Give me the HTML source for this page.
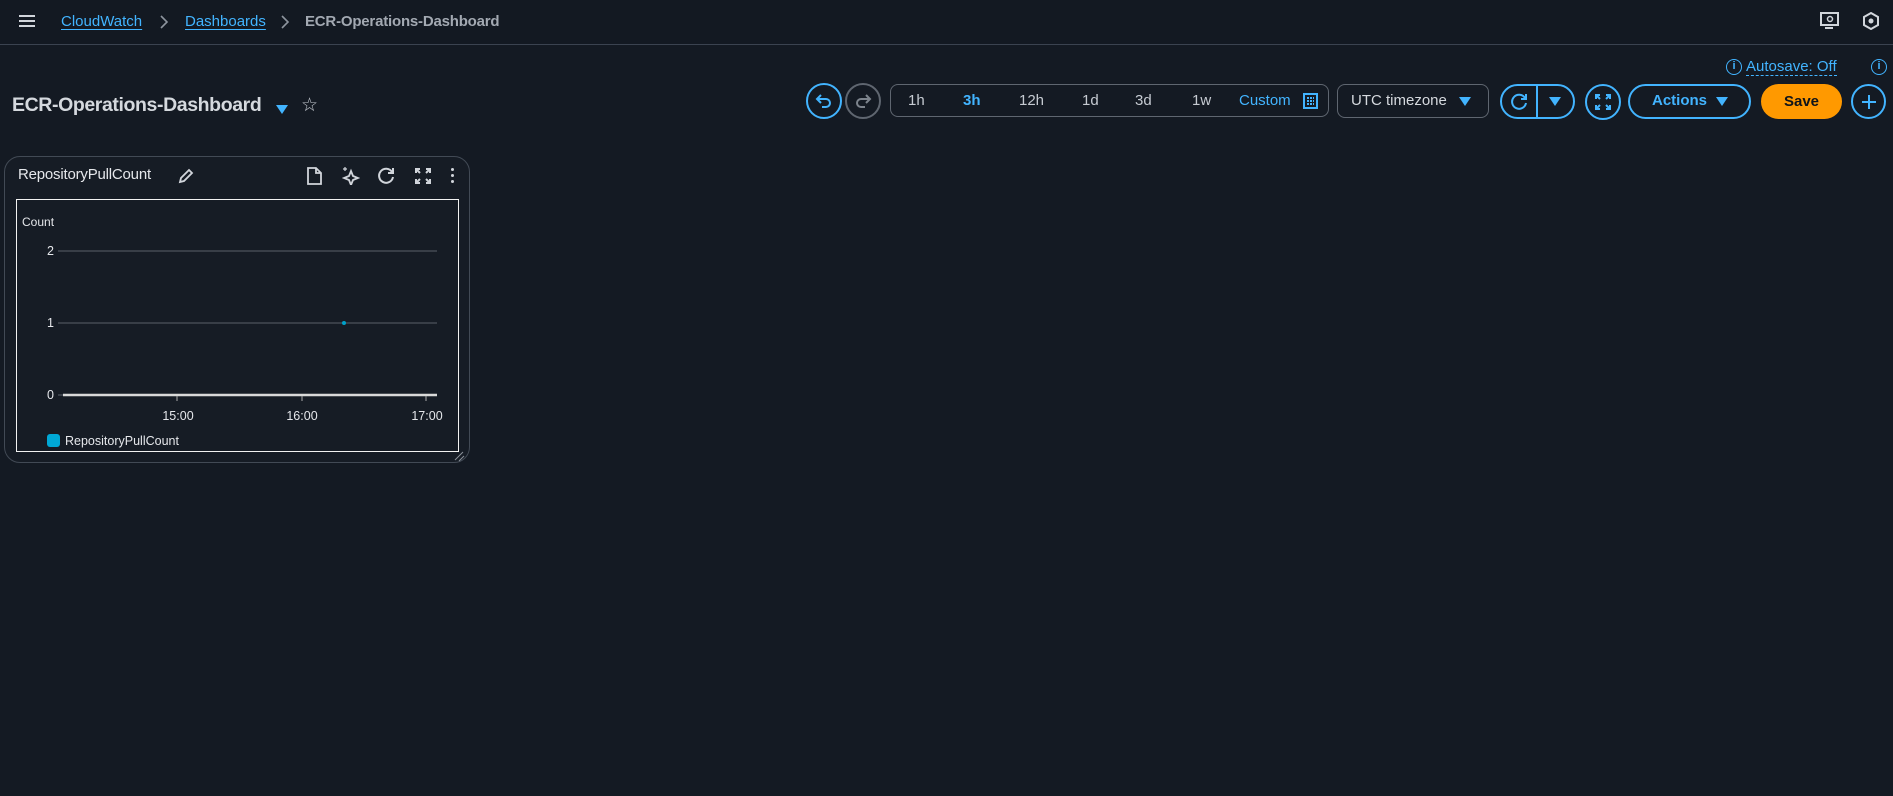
<!DOCTYPE html>
<html><head><meta charset="utf-8"><style>
*{box-sizing:border-box;margin:0;padding:0}
body{width:1893px;height:796px;background:#141a23;font-family:"Liberation Sans",sans-serif;color:#d1d5db;position:relative;overflow:hidden}
.a{position:absolute}
.hdr{left:0;top:0;width:1893px;height:45px;border-bottom:1px solid #3b4350;background:#131922}
.link{color:#42b4ff;text-decoration:underline;text-underline-offset:3px;font-size:15px}
.circ{border:2px solid #42b4ff;border-radius:50%;width:36px;height:36px;display:flex;align-items:center;justify-content:center}
.tr{font-size:15px;color:#c6cbd2;top:92px}
</style></head><body>
<div class="a hdr"></div>
<div class="a" style="left:19px;top:15px;width:16px;height:2px;background:#d1d5db;box-shadow:0 5px 0 #d1d5db,0 10px 0 #d1d5db"></div>
<div class="a link" style="left:61px;top:13px">CloudWatch</div>
<svg class="a" style="left:159px;top:14px" width="10" height="16"><path d="M2 2l6 6-6 6" fill="none" stroke="#8d949e" stroke-width="1.6"/></svg>
<div class="a link" style="left:185px;top:13px">Dashboards</div>
<svg class="a" style="left:280px;top:14px" width="10" height="16"><path d="M2 2l6 6-6 6" fill="none" stroke="#8d949e" stroke-width="1.6"/></svg>
<div class="a" style="left:305px;top:13px;font-size:15px;font-weight:bold;color:#a3a9b2;letter-spacing:-0.2px">ECR-Operations-Dashboard</div>
<svg class="a" style="left:1820px;top:12px" width="20" height="18" viewBox="0 0 20 18"><rect x="1" y="1" width="17" height="12" fill="none" stroke="#d1d5db" stroke-width="2"/><path d="M5 16h8" stroke="#d1d5db" stroke-width="2"/><circle cx="10" cy="7" r="2.5" fill="none" stroke="#d1d5db" stroke-width="1.5"/></svg>
<svg class="a" style="left:1862px;top:12px" width="18" height="18" viewBox="0 0 18 18"><path d="M9 1l7 4v8l-7 4-7-4V5z" fill="none" stroke="#d1d5db" stroke-width="2"/><circle cx="9" cy="9" r="2.5" fill="#d1d5db"/></svg>

<div class="a" style="left:12px;top:94px;font-size:19.5px;font-weight:bold;color:#d5d9de;letter-spacing:-0.4px">ECR-Operations-Dashboard</div>
<div class="a" style="left:276px;top:105px;width:0;height:0;border-left:6px solid transparent;border-right:6px solid transparent;border-top:9px solid #42b4ff"></div>
<div class="a" style="left:301px;top:94px;font-size:19px;color:#c6cbd2">☆</div>

<div class="a" style="left:1726px;top:59px;width:16px;height:16px;border:1.5px solid #42b4ff;border-radius:50%;color:#42b4ff;font-size:11px;text-align:center;line-height:13px;font-weight:bold">i</div>
<div class="a" style="left:1746px;top:58px;font-size:15px;color:#42b4ff;border-bottom:1.5px dashed #42b4ff">Autosave: Off</div>
<div class="a" style="left:1871px;top:59px;width:16px;height:16px;border:1.5px solid #42b4ff;border-radius:50%;color:#42b4ff;font-size:11px;text-align:center;line-height:13px;font-weight:bold">i</div>

<div class="a circ" style="left:806px;top:83px"><svg width="18" height="18" viewBox="0 0 18 18"><path d="M6 3L2 7l4 4M2 7h9a4 4 0 010 8H7" fill="none" stroke="#42b4ff" stroke-width="2"/></svg></div>
<div class="a circ" style="left:845px;top:83px;border-color:#5f6670"><svg width="18" height="18" viewBox="0 0 18 18"><path d="M12 3l4 4-4 4M16 7H7a4 4 0 000 8h4" fill="none" stroke="#7d848d" stroke-width="2"/></svg></div>
<div class="a" style="left:890px;top:84px;width:439px;height:33px;border:1px solid #5f6670;border-radius:8px"></div>
<div class="a tr" style="left:908px">1h</div>
<div class="a tr" style="left:963px;color:#42b4ff;font-weight:bold">3h</div>
<div class="a tr" style="left:1019px">12h</div>
<div class="a tr" style="left:1082px">1d</div>
<div class="a tr" style="left:1135px">3d</div>
<div class="a tr" style="left:1192px">1w</div>
<div class="a tr" style="left:1239px;color:#42b4ff">Custom</div>
<svg class="a" style="left:1303px;top:93px" width="15" height="16" viewBox="0 0 15 16"><rect x="1" y="1" width="13" height="14" fill="none" stroke="#42b4ff" stroke-width="2"/><path d="M4 5h2M7 5h2M10 5h1M4 8h2M7 8h2M10 8h1M4 11h2M7 11h2M10 11h1" stroke="#42b4ff" stroke-width="2"/></svg>
<div class="a" style="left:1337px;top:84px;width:152px;height:34px;border:1px solid #5f6670;border-radius:8px"></div>
<div class="a tr" style="left:1351px;color:#d5d9de">UTC timezone</div>
<div class="a" style="left:1459px;top:97px;border-left:6px solid transparent;border-right:6px solid transparent;border-top:9px solid #42b4ff"></div>
<div class="a" style="left:1500px;top:84px;width:75px;height:35px;border:2px solid #42b4ff;border-radius:18px"></div>
<div class="a" style="left:1536px;top:85px;width:2px;height:33px;background:#42b4ff"></div>
<svg class="a" style="left:1509px;top:92px" width="20" height="20" viewBox="0 0 20 20"><path d="M16 6A7 7 0 1 0 17 11" fill="none" stroke="#42b4ff" stroke-width="2"/><path d="M17 2v5h-5" fill="none" stroke="#42b4ff" stroke-width="2"/></svg>
<div class="a" style="left:1549px;top:97px;border-left:6px solid transparent;border-right:6px solid transparent;border-top:9px solid #42b4ff"></div>
<div class="a circ" style="left:1585px;top:84px"><svg width="16" height="16" viewBox="0 0 16 16"><path d="M1 5V1h4M11 1h4v4M15 11v4h-4M5 15H1v-4M2 2l3 3M14 2l-3 3M14 14l-3-3M2 14l3-3" fill="none" stroke="#42b4ff" stroke-width="2"/></svg></div>
<div class="a" style="left:1628px;top:84px;width:123px;height:35px;border:2px solid #42b4ff;border-radius:18px"></div>
<div class="a" style="left:1652px;top:92px;color:#42b4ff;font-weight:bold;font-size:15px">Actions</div>
<div class="a" style="left:1716px;top:97px;border-left:6px solid transparent;border-right:6px solid transparent;border-top:9px solid #42b4ff"></div>
<div class="a" style="left:1761px;top:84px;width:81px;height:35px;background:#ff9900;border-radius:18px;color:#0f141a;font-weight:bold;font-size:15px;text-align:center;line-height:35px">Save</div>
<div class="a circ" style="left:1851px;top:84px;width:35px;height:35px"><svg width="16" height="16"><path d="M8 1v14M1 8h14" stroke="#42b4ff" stroke-width="2"/></svg></div>

<div class="a" style="left:4px;top:156px;width:466px;height:307px;border:1px solid #424a55;border-radius:16px;background:#161c25"></div>
<div class="a" style="left:18px;top:166px;font-size:15px;color:#e5e7eb;letter-spacing:-0.2px">RepositoryPullCount</div>
<svg class="a" style="left:178px;top:168px" width="16" height="16" viewBox="0 0 16 16"><path d="M2 14l1-4 8-8 3 3-8 8z" fill="none" stroke="#d1d5db" stroke-width="1.8"/></svg>
<svg class="a" style="left:307px;top:167px" width="15" height="18" viewBox="0 0 15 18"><path d="M1 1h8l5 5v11H1z M9 1v5h5" fill="none" stroke="#d1d5db" stroke-width="1.8"/></svg>
<svg class="a" style="left:342px;top:167px" width="18" height="18" viewBox="0 0 18 18"><path d="M9 4l2 5 5 2-5 2-2 5-2-5-5-2 5-2z" fill="none" stroke="#d1d5db" stroke-width="1.8"/><path d="M3 0v4M1 2h4" stroke="#d1d5db" stroke-width="1.2"/></svg>
<svg class="a" style="left:377px;top:167px" width="18" height="18" viewBox="0 0 18 18"><path d="M15 5A7 7 0 1 0 16 10" fill="none" stroke="#d1d5db" stroke-width="2"/><path d="M16 1v5h-5" fill="none" stroke="#d1d5db" stroke-width="2"/></svg>
<svg class="a" style="left:415px;top:168px" width="16" height="16" viewBox="0 0 16 16"><path d="M1 5V1h4M11 1h4v4M15 11v4h-4M5 15H1v-4M2 2l3 3M14 2l-3 3M14 14l-3-3M2 14l3-3" fill="none" stroke="#d1d5db" stroke-width="2"/></svg>
<div class="a" style="left:451px;top:168px;width:3px;height:3px;background:#d1d5db;border-radius:50%;box-shadow:0 6px 0 #d1d5db,0 12px 0 #d1d5db"></div>
<div class="a" style="left:16px;top:199px;width:443px;height:253px;border:1.5px solid #f2f2f2"></div>
<div class="a" style="left:22px;top:215px;font-size:12px;color:#e5e7eb">Count</div>
<svg class="a" style="left:0;top:0" width="480" height="470">
<g stroke="#5a6069" stroke-width="1"><line x1="58" y1="251" x2="437" y2="251"/><line x1="58" y1="323" x2="437" y2="323"/><line x1="58" y1="395" x2="63" y2="395"/></g>
<line x1="63" y1="395" x2="437" y2="395" stroke="#d9d9d9" stroke-width="2.5"/>
<g stroke="#aaa"><line x1="177" y1="396" x2="177" y2="401"/><line x1="302" y1="396" x2="302" y2="401"/><line x1="426" y1="396" x2="426" y2="401"/></g>
<circle cx="344" cy="323" r="2" fill="#00a1c9"/>
<g fill="#e5e7eb" font-family="Liberation Sans" font-size="12.5"><text x="47" y="255">2</text><text x="47" y="327">1</text><text x="47" y="399">0</text>
<text x="178" y="420" text-anchor="middle">15:00</text><text x="302" y="420" text-anchor="middle">16:00</text><text x="427" y="420" text-anchor="middle">17:00</text>
<text x="65" y="445">RepositoryPullCount</text></g>
<rect x="47" y="434" width="13" height="13" rx="3" fill="#00a8d6"/>
<path d="M455 460l8-8M459 461l5-5" stroke="#8a9099"/>
</svg>
</body></html>
